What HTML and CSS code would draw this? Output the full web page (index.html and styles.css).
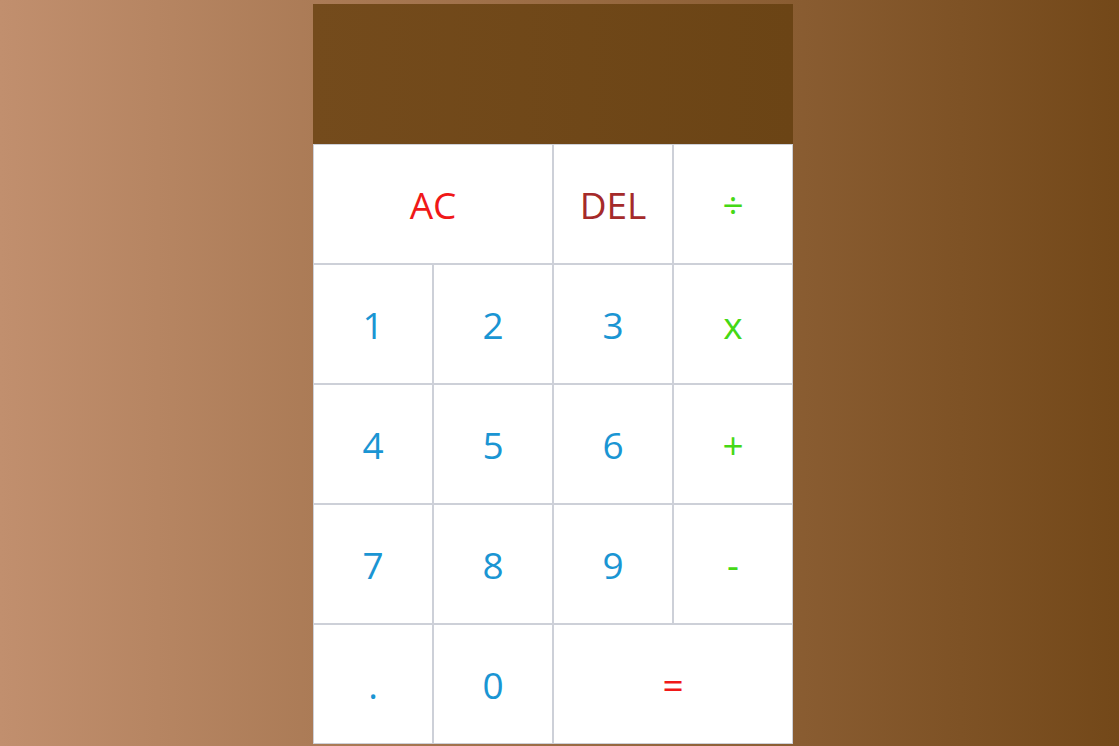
FILE: index.html
```html
<!DOCTYPE html>
<html lang="en">
<head>
<meta charset="utf-8">
<title>Calculator</title>
<link rel="stylesheet" href="styles.css">
</head>
<body>
<div class="page">
  <div class="calculator">
    <div class="display"></div>
    <button class="key span-two clear">AC</button>
    <button class="key del">DEL</button>
    <button class="key op">÷</button>
    <button class="key num">1</button>
    <button class="key num">2</button>
    <button class="key num">3</button>
    <button class="key op">x</button>
    <button class="key num">4</button>
    <button class="key num">5</button>
    <button class="key num">6</button>
    <button class="key op">+</button>
    <button class="key num">7</button>
    <button class="key num">8</button>
    <button class="key num">9</button>
    <button class="key op">-</button>
    <button class="key num">.</button>
    <button class="key num">0</button>
    <button class="key span-two equals">=</button>
  </div>
</div>
</body>
</html>
```
FILE: styles.css
```css
html, body {
  margin: 0;
  padding: 0;
}

.page {
  box-sizing: border-box;
  min-height: 100vh;
  padding: 4px 0 0 313px;
  background: linear-gradient(to right, #c18f6e, #734819);
}

.calculator {
  display: grid;
  grid-template-columns: repeat(4, 120px);
  grid-template-rows: 140px repeat(5, 120px);
  width: 480px;
}

.display {
  grid-column: 1 / -1;
  background: linear-gradient(to right, #744b1c, #6b4415);
}

.key {
  margin: 0;
  padding: 0;
  border: 1px solid #cdd0d8;
  background: #fff;
  font-family: "Open Sans", "Noto Sans", sans-serif;
  font-size: 37px;
  font-weight: 400;
  line-height: 1;
  cursor: pointer;
}

.span-two {
  grid-column: span 2;
}

.num { color: #1a95d3; }
.op { color: #45d815; }
.clear { color: #f01818; }
.del { color: #a52a2a; }
.equals { color: #f01818; }
```
